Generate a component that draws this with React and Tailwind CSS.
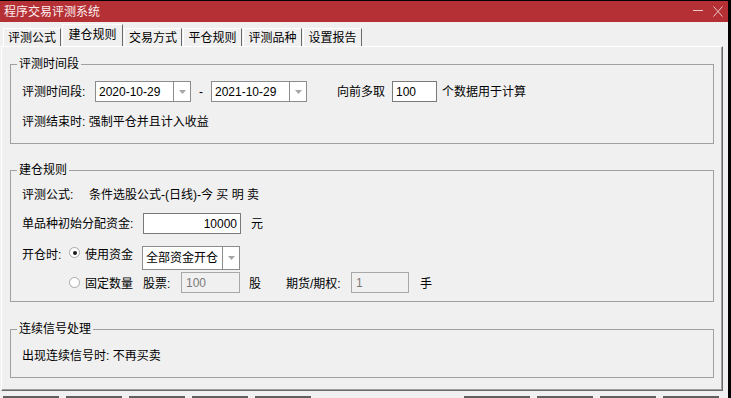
import React from "react";

const tabs = ["评测公式", "建仓规则", "交易方式", "平仓规则", "评测品种", "设置报告"];
const tabWidths = ["w-[58px]", "w-[61px]", "w-[58px]", "w-[59px]", "w-[59px]", "w-[59px]"];

function Arrow() {
  return (
    <svg width="7" height="4" viewBox="0 0 7 4">
      <path d="M0 0h7L3.5 4z" fill="#a6a6a6" />
    </svg>
  );
}

function Combo({ text, className }) {
  return (
    <div className={`flex border border-[#8c8c8c] bg-white ${className}`}>
      <span className="flex-1 flex items-center pl-[3px] whitespace-nowrap">{text}</span>
      <span className="w-[17px] border-l border-[#8c8c8c] flex items-center justify-center">
        <Arrow />
      </span>
    </div>
  );
}

function Radio({ checked }) {
  return (
    <span className="w-[11px] h-[11px] rounded-full border border-[#a8a8a8] bg-white flex items-center justify-center shrink-0">
      {checked && <span className="w-[4px] h-[4px] rounded-full bg-[#1a1a1a]" />}
    </span>
  );
}

function Group({ title, className, children }) {
  return (
    <fieldset className={`ml-[8px] w-[704px] border border-[#a0a0a0] ${className}`}>
      <legend className="ml-[6px] px-[2px]">{title}</legend>
      {children}
    </fieldset>
  );
}

export default function App() {
  return (
    <div className="w-[731px] h-[398px] bg-black overflow-hidden font-['Liberation_Sans','Noto_Sans_CJK_SC',sans-serif] text-[12px] leading-[16px] text-black">
      <div className="w-[728px] h-full pt-px flex flex-col">
        {/* title bar */}
        <div className="h-[21px] shrink-0 bg-[#b53035] flex items-center justify-between pl-[4px] pr-[5px] text-[#fbeeee]">
          <span>程序交易评测系统</span>
          <div className="flex items-center gap-[10px]">
            <svg width="10" height="11" viewBox="0 0 10 11">
              <path d="M0 4.5h10" stroke="#ecc8c8" />
            </svg>
            <svg width="10" height="11" viewBox="0 0 10 11">
              <path d="M0.5 0.5l9 10M9.5 0.5l-9 10" stroke="#ecc8c8" />
            </svg>
          </div>
        </div>

        <div className="flex-1 bg-[#f0f0f0] flex flex-col">
          {/* tabs */}
          <div className="h-[24px] shrink-0 flex items-end gap-[1px] pl-[3px]">
            {tabs.map((t, i) =>
              i === 1 ? (
                <div
                  key={t}
                  className={`${tabWidths[i]} h-[22px] pt-[2px] border-l border-t border-white border-r border-r-[#696969] text-center`}
                >
                  {t}
                </div>
              ) : (
                <div
                  key={t}
                  className={`${tabWidths[i]} h-[18px] pt-[1px] border-l border-t border-white border-r border-r-[#696969] text-center`}
                >
                  {t}
                </div>
              )
            )}
          </div>

          {/* tab panel */}
          <div className="ml-[1px] w-[722px] h-[345px] shrink-0 border-l border-t border-white border-r border-b border-r-[#696969] border-b-[#696969]">
            <div className="h-full border-r border-b border-[#a0a0a0] pt-[9px]">
              <Group title="评测时间段" className="h-[88px]">
                <div className="pl-[11px] pt-[9px]">
                  <div className="h-[21px] flex items-center">
                    <span className="w-[73px]">评测时间段:</span>
                    <Combo text="2020-10-29" className="w-[96px] h-[21px]" />
                    <span className="w-[20px] text-center">-</span>
                    <Combo text="2021-10-29" className="w-[96px] h-[21px]" />
                    <span className="ml-[30px]">向前多取</span>
                    <span className="ml-[7px] w-[45px] h-[21px] border border-[#7a7a7a] bg-white pl-[3px] flex items-center">
                      100
                    </span>
                    <span className="ml-[5px]">个数据用于计算</span>
                  </div>
                  <div className="mt-[12px]">评测结束时: 强制平仓并且计入收益</div>
                </div>
              </Group>

              <Group title="建仓规则" className="mt-[18px] h-[140px]">
                <div className="pl-[11px] pt-[9px]">
                  <div className="h-[16px] flex">
                    <span className="w-[67px]">评测公式:</span>
                    <span>条件选股公式-(日线)-今 买 明 卖</span>
                  </div>
                  <div className="mt-[10px] h-[21px] flex items-center">
                    <span className="w-[121px]">单品种初始分配资金:</span>
                    <span className="w-[98px] h-[21px] border border-[#7a7a7a] bg-white pr-[3px] flex items-center justify-end">
                      10000
                    </span>
                    <span className="ml-[10px]">元</span>
                  </div>
                  <div className="mt-[12px] h-[24px] flex items-start">
                    <span className="w-[47px] mt-[1px]">开仓时:</span>
                    <span className="mt-[1px]">
                      <Radio checked />
                    </span>
                    <span className="ml-[5px] w-[57px] mt-[1px]">使用资金</span>
                    <Combo text="全部资金开仓" className="w-[98px] h-[24px]" />
                  </div>
                  <div className="mt-[2px] h-[21px] flex items-center">
                    <span className="w-[47px]" />
                    <Radio />
                    <span className="ml-[5px] w-[58px] mt-[2px]">固定数量</span>
                    <span className="w-[38px] mt-[2px]">股票:</span>
                    <span className="w-[59px] h-[21px] border border-[#a8a8a8] pl-[4px] text-[#7a7a7a] flex items-center">
                      100
                    </span>
                    <span className="ml-[9px] mt-[2px]">股</span>
                    <span className="ml-[25px] w-[65px] mt-[2px]">期货/期权:</span>
                    <span className="w-[58px] h-[21px] border border-[#a8a8a8] pl-[4px] text-[#7a7a7a] flex items-center">
                      1
                    </span>
                    <span className="ml-[11px] mt-[2px]">手</span>
                  </div>
                </div>
              </Group>

              <Group title="连续信号处理" className="mt-[19px] h-[57px]">
                <div className="pl-[11px] pt-[11px]">出现连续信号时: 不再买卖</div>
              </Group>
            </div>
          </div>

          <div className="h-[5px] shrink-0" />

          {/* bottom buttons, cut off */}
          <div className="flex items-start pl-[3px]">
            <div className="flex gap-[7px]">
              {[0, 1, 2, 3, 4].map((k) => (
                <span key={k} className="w-[56px] h-[2px] bg-[#5f5f5f]" />
              ))}
            </div>
            <div className="ml-[153px] flex gap-[7px]">
              <span className="w-[66px] h-[2px] bg-[#5f5f5f]" />
              <span className="w-[56px] h-[2px] bg-[#5f5f5f]" />
              <span className="w-[56px] h-[2px] bg-[#5f5f5f]" />
              <span className="w-[56px] h-[2px] bg-[#5f5f5f]" />
            </div>
          </div>
        </div>
      </div>
    </div>
  );
}
